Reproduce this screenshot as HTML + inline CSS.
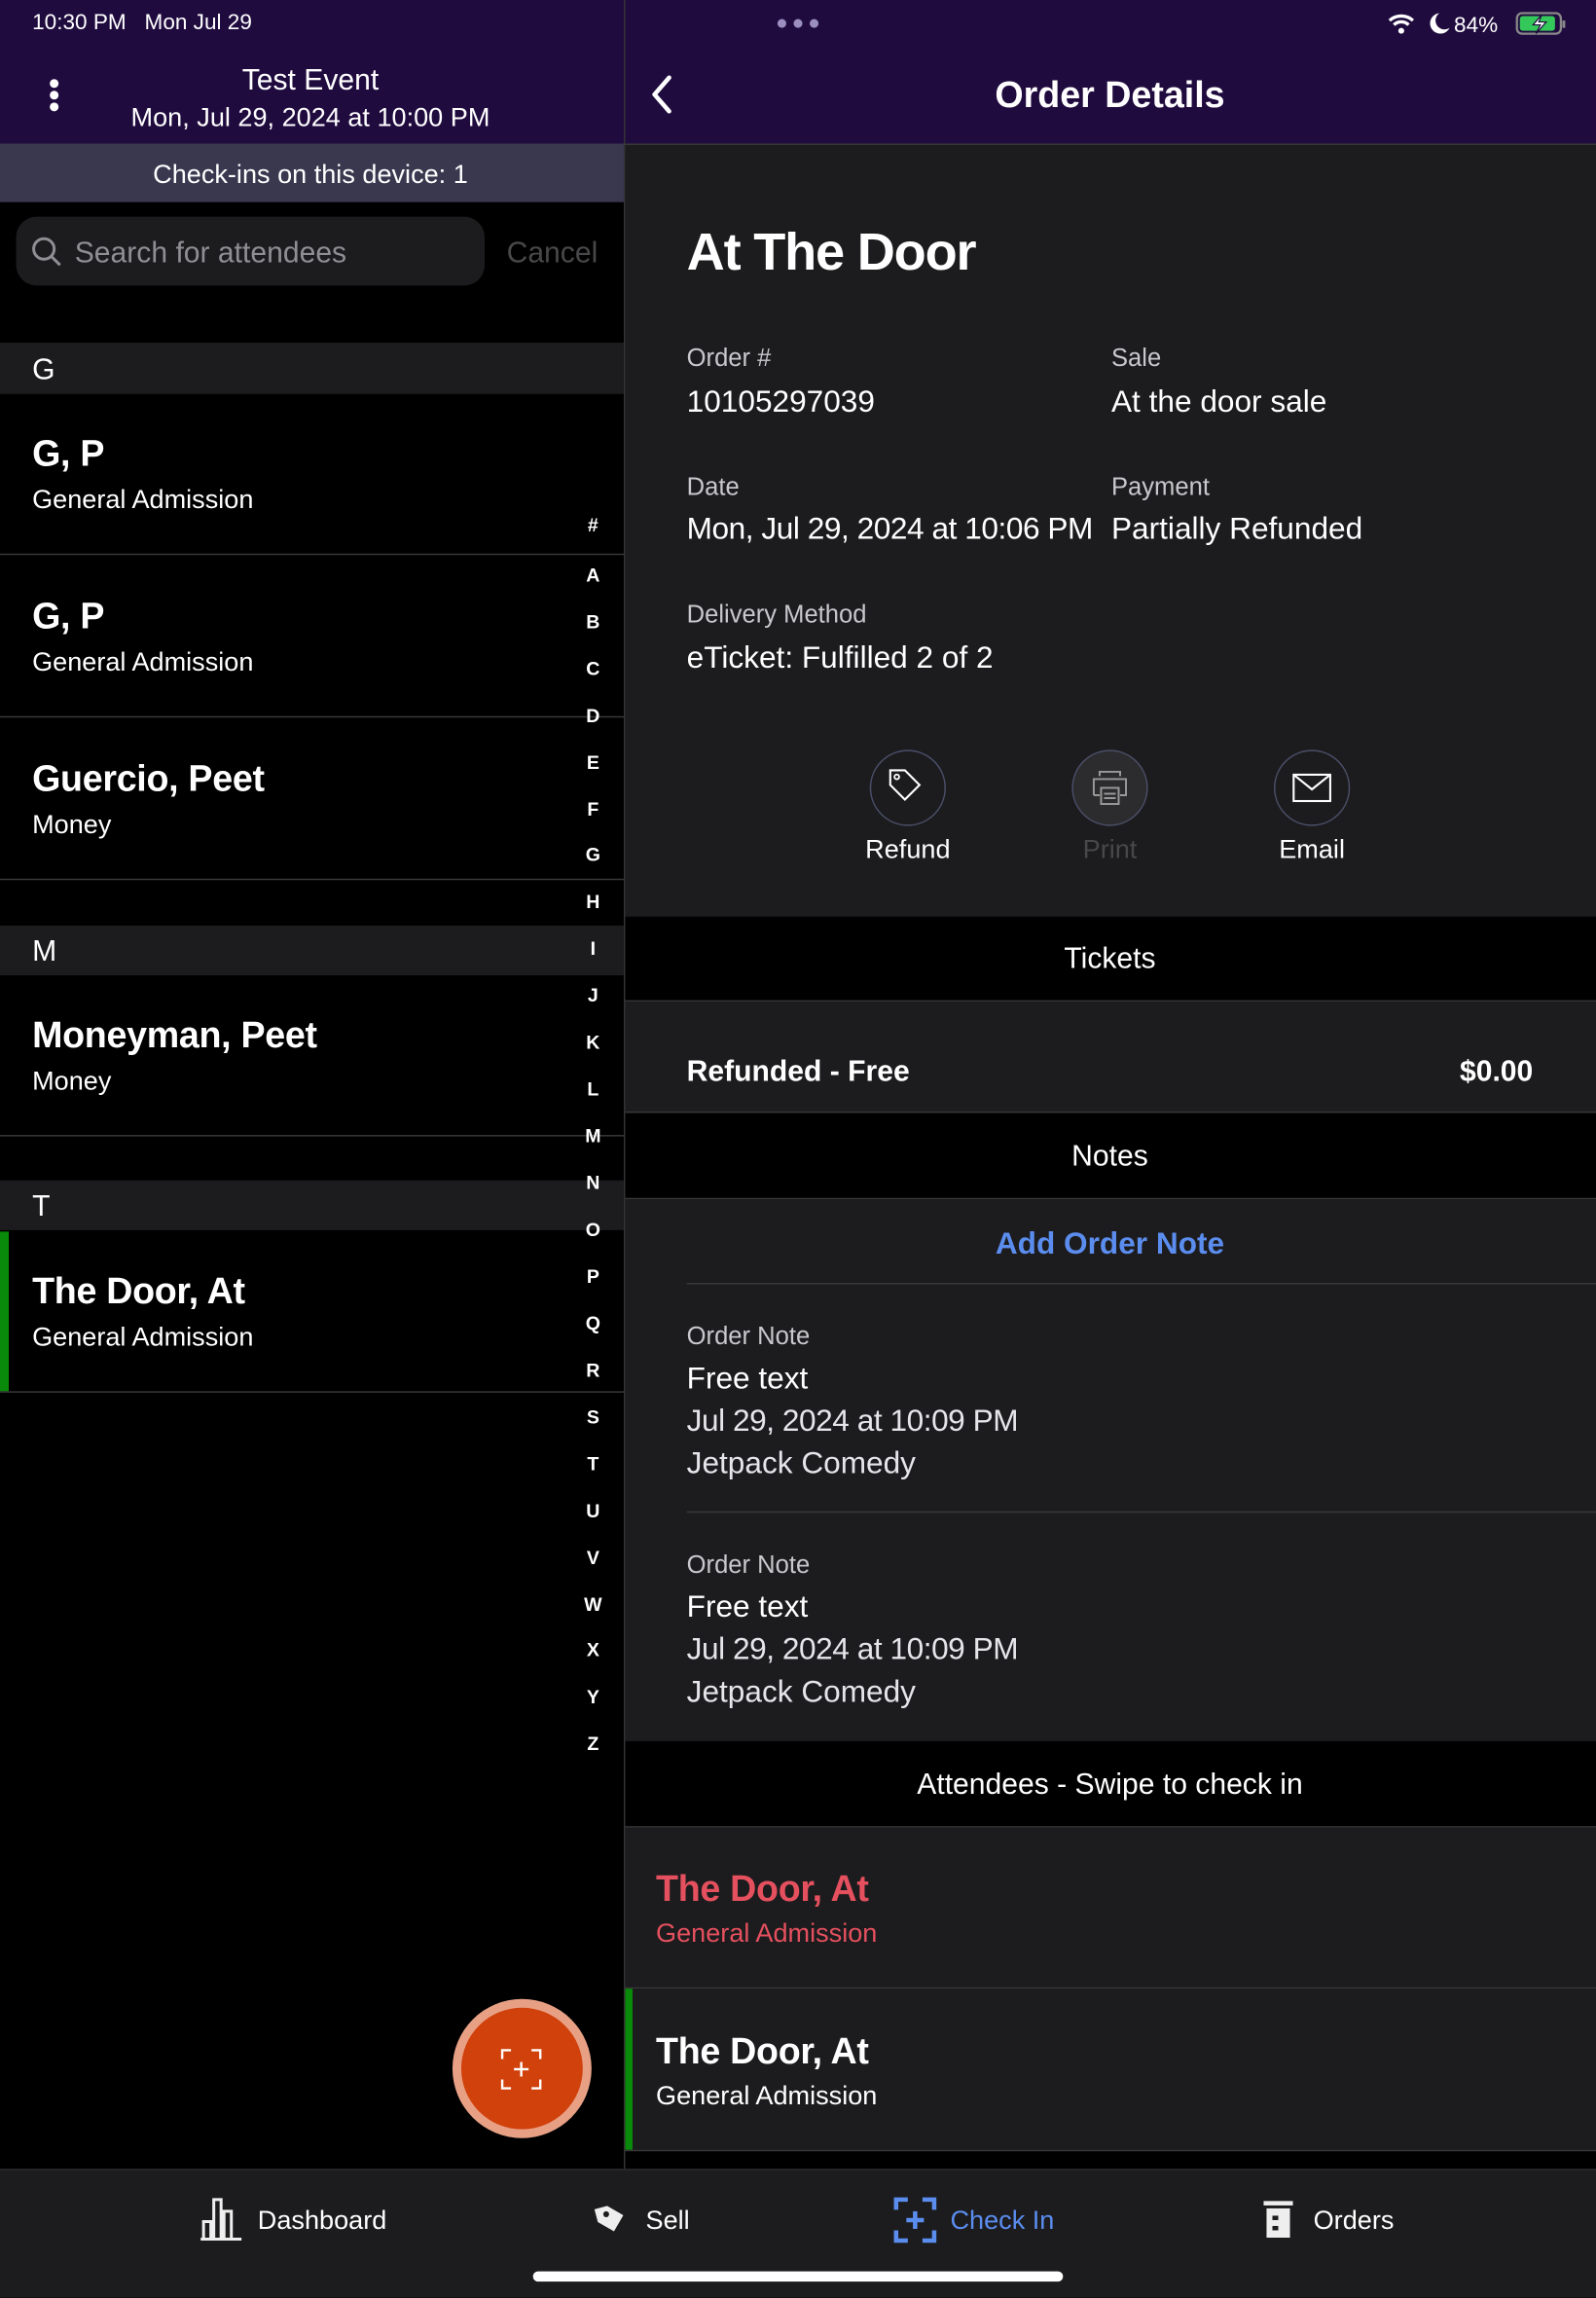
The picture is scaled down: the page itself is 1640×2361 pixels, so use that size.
<!DOCTYPE html>
<html><head><meta charset="utf-8">
<style>
*{margin:0;padding:0;box-sizing:border-box}
html,body{width:1640px;height:2360px;overflow:hidden;background:#000}
#w{position:absolute;left:0;top:0;width:1090px;height:1569px;transform:scale(1.504587);transform-origin:0 0;font-family:"Liberation Sans",sans-serif;color:#fff;overflow:hidden}
.a{position:absolute}
.t{position:absolute;white-space:nowrap;line-height:1.2;margin-top:1px}
.c{transform:translateX(-50%)}
.sep{position:absolute;height:1px;background:#38383a}
.nm{font-size:25px;font-weight:600;letter-spacing:-.2px}
.sb{font-size:18px}
.lbl{font-size:17px;color:#c8c8cc}
.val{font-size:21px}
.idx{position:absolute;left:405px;transform:translateX(-50%);font-size:13px;font-weight:700;line-height:1.2;margin-top:1px}
</style></head><body><div id="w">
<!-- header -->
<div class="a" style="left:0;top:0;width:1090px;height:98px;background:#200b3f"></div>
<div class="a" style="left:426px;top:0;width:1px;height:1481px;background:#333"></div>
<div class="sep" style="left:426px;top:98px;width:664px;background:#3a3a3c"></div>
<div class="t" style="left:22px;top:6px;font-size:15px">10:30 PM &nbsp; Mon Jul 29</div>
<div class="t c" style="left:212px;top:42px;font-size:20px">Test Event</div>
<div class="t c" style="left:212px;top:69px;font-size:18px">Mon, Jul 29, 2024 at 10:00 PM</div>
<div class="a" style="left:34px;top:54px;width:6px;height:6px;border-radius:3px;background:#fff"></div>
<div class="a" style="left:34px;top:62px;width:6px;height:6px;border-radius:3px;background:#fff"></div>
<div class="a" style="left:34px;top:70px;width:6px;height:6px;border-radius:3px;background:#fff"></div>
<div class="a" style="left:531px;top:13px;width:6px;height:6px;border-radius:3px;background:#9b8fc0"></div>
<div class="a" style="left:542px;top:13px;width:6px;height:6px;border-radius:3px;background:#9b8fc0"></div>
<div class="a" style="left:553px;top:13px;width:6px;height:6px;border-radius:3px;background:#9b8fc0"></div>
<svg class="a" style="left:946px;top:6px" width="128" height="20" viewBox="0 0 128 20">
<path d="M3 8a12 12 0 0 1 16 0M6 11a7 7 0 0 1 10 0" stroke="#fff" stroke-width="2.2" fill="none"/><circle cx="11" cy="15" r="2" fill="#fff"/>
<path d="M37 3a7 7 0 1 0 7 10a6 6 0 0 1-7-10z" fill="#fff"/>
<text x="47" y="16" fill="#fff" font-size="15" font-family="Liberation Sans">84%</text>
<rect x="90" y="3" width="30" height="14" rx="3.5" fill="none" stroke="#888" stroke-width="1.5"/><rect x="92" y="5" width="24" height="10" rx="2" fill="#34c759"/><rect x="121" y="8" width="2" height="5" fill="#888"/>
<path d="M107 4l-6 7h5l-3 6 7-8h-5z" fill="#fff" stroke="#200b3f" stroke-width=".8"/>
</svg>
<svg class="a" style="left:443px;top:51px" width="18" height="28"><path d="M14 2L4 13.5 14 25" stroke="#fff" stroke-width="3" fill="none" stroke-linecap="round" stroke-linejoin="round"/></svg>
<div class="t c" style="left:758px;top:49px;font-size:25px;font-weight:600">Order Details</div>

<!-- left -->
<div class="a" style="left:0;top:98px;width:426px;height:40px;background:#3a384f"></div>
<div class="t c" style="left:212px;top:108px;font-size:18px">Check-ins on this device: 1</div>
<div class="a" style="left:11px;top:148px;width:320px;height:47px;border-radius:14px;background:#1c1c1e"></div>
<svg class="a" style="left:21px;top:161px" width="22" height="22"><circle cx="9" cy="9" r="7" stroke="#8e8e93" stroke-width="2" fill="none"/><path d="M14 14l6 6" stroke="#8e8e93" stroke-width="2"/></svg>
<div class="t" style="left:51px;top:160px;font-size:20px;color:#8e8e93">Search for attendees</div>
<div class="t" style="left:346px;top:160px;font-size:20px;color:#48484a">Cancel</div>

<div class="a" style="left:0;top:234px;width:426px;height:35px;background:#1c1c1e"></div>
<div class="t" style="left:22px;top:240px;font-size:20px">G</div>
<div class="t nm" style="left:22px;top:294px">G, P</div>
<div class="t sb" style="left:22px;top:330px">General Admission</div>
<div class="sep" style="left:0;top:378px;width:426px"></div>
<div class="t nm" style="left:22px;top:405px">G, P</div>
<div class="t sb" style="left:22px;top:441px">General Admission</div>
<div class="sep" style="left:0;top:489px;width:426px"></div>
<div class="t nm" style="left:22px;top:516px">Guercio, Peet</div>
<div class="t sb" style="left:22px;top:552px">Money</div>
<div class="sep" style="left:0;top:600px;width:426px"></div>
<div class="a" style="left:0;top:632px;width:426px;height:34px;background:#1c1c1e"></div>
<div class="t" style="left:22px;top:637px;font-size:20px">M</div>
<div class="t nm" style="left:22px;top:691px">Moneyman, Peet</div>
<div class="t sb" style="left:22px;top:727px">Money</div>
<div class="sep" style="left:0;top:775px;width:426px"></div>
<div class="a" style="left:0;top:806px;width:426px;height:34px;background:#1c1c1e"></div>
<div class="t" style="left:22px;top:811px;font-size:20px">T</div>
<div class="a" style="left:0;top:841px;width:6px;height:109px;background:#0a8a0a"></div>
<div class="t nm" style="left:22px;top:866px">The Door, At</div>
<div class="t sb" style="left:22px;top:902px">General Admission</div>
<div class="sep" style="left:0;top:950px;width:426px"></div>

<div class="idx" style="top:350px">#</div>
<div class="idx" style="top:384px">A</div><div class="idx" style="top:416px">B</div><div class="idx" style="top:448px">C</div><div class="idx" style="top:480px">D</div><div class="idx" style="top:512px">E</div><div class="idx" style="top:544px">F</div><div class="idx" style="top:575px">G</div><div class="idx" style="top:607px">H</div><div class="idx" style="top:639px">I</div><div class="idx" style="top:671px">J</div><div class="idx" style="top:703px">K</div><div class="idx" style="top:735px">L</div><div class="idx" style="top:767px">M</div><div class="idx" style="top:799px">N</div><div class="idx" style="top:831px">O</div><div class="idx" style="top:863px">P</div><div class="idx" style="top:895px">Q</div><div class="idx" style="top:927px">R</div><div class="idx" style="top:959px">S</div><div class="idx" style="top:991px">T</div><div class="idx" style="top:1023px">U</div><div class="idx" style="top:1055px">V</div><div class="idx" style="top:1087px">W</div><div class="idx" style="top:1118px">X</div><div class="idx" style="top:1150px">Y</div><div class="idx" style="top:1182px">Z</div>

<div class="a" style="left:309px;top:1365px;width:95px;height:95px;border-radius:50%;background:#e8a085"></div>
<div class="a" style="left:315px;top:1371px;width:83px;height:83px;border-radius:50%;background:#d0410c"></div>
<svg class="a" style="left:341px;top:1398px" width="30" height="30" viewBox="0 0 30 30"><path d="M2 8V2h6M22 2h6v6M28 22v6h-6M8 28H2v-6M15 10v10M10 15h10" stroke="#fff" stroke-width="1.6" fill="none"/></svg>

<!-- right -->
<div class="a" style="left:427px;top:99px;width:663px;height:527px;background:#1c1c1e"></div>
<div class="t" style="left:469px;top:149px;font-size:36px;font-weight:700;letter-spacing:-.8px">At The Door</div>
<div class="t lbl" style="left:469px;top:234px">Order #</div>
<div class="t val" style="left:469px;top:261px">10105297039</div>
<div class="t lbl" style="left:759px;top:234px">Sale</div>
<div class="t val" style="left:759px;top:261px">At the door sale</div>
<div class="t lbl" style="left:469px;top:322px">Date</div>
<div class="t val" style="left:469px;top:348px;letter-spacing:-.3px">Mon, Jul 29, 2024 at 10:06 PM</div>
<div class="t lbl" style="left:759px;top:322px">Payment</div>
<div class="t val" style="left:759px;top:348px">Partially Refunded</div>
<div class="t lbl" style="left:469px;top:409px">Delivery Method</div>
<div class="t val" style="left:469px;top:436px">eTicket: Fulfilled 2 of 2</div>

<div class="a" style="left:594px;top:512px;width:52px;height:52px;border-radius:50%;border:1.5px solid #4a4e68"></div>
<svg class="a" style="left:605px;top:524px" width="30" height="30" viewBox="0 0 30 30"><path d="M3 2h10l10 10-10 10L3 12z" stroke="#fff" stroke-width="1.4" fill="none"/><circle cx="7.5" cy="6.5" r="1.6" stroke="#fff" stroke-width="1.2" fill="none"/></svg>
<div class="a" style="left:732px;top:512px;width:52px;height:52px;border-radius:50%;border:1.5px solid #4a4e68;background:#2c2c2e"></div>
<svg class="a" style="left:744px;top:524px" width="28" height="28" viewBox="0 0 28 28"><path d="M7 6V3h14v3M3 19V8h22v11h-4M7 19H3" stroke="#999" stroke-width="1.3" fill="none"/><rect x="8" y="14" width="12" height="11" stroke="#999" stroke-width="1.3" fill="none"/><path d="M10 18h8M10 21h8" stroke="#999" stroke-width="1.3"/></svg>
<div class="a" style="left:870px;top:512px;width:52px;height:52px;border-radius:50%;border:1.5px solid #4a4e68"></div>
<svg class="a" style="left:882px;top:526px" width="28" height="24" viewBox="0 0 28 24"><rect x="1.5" y="3" width="25" height="18" stroke="#fff" stroke-width="1.4" fill="none"/><path d="M1.5 3L14 13 26.5 3" stroke="#fff" stroke-width="1.4" fill="none"/></svg>
<div class="t c" style="left:620px;top:569px;font-size:18px">Refund</div>
<div class="t c" style="left:758px;top:569px;font-size:18px;color:#48484a">Print</div>
<div class="t c" style="left:896px;top:569px;font-size:18px">Email</div>

<div class="a" style="left:427px;top:626px;width:663px;height:58px;background:#000"></div>
<div class="t c" style="left:758px;top:642px;font-size:20px">Tickets</div>
<div class="sep" style="left:427px;top:683px;width:663px"></div>
<div class="a" style="left:427px;top:684px;width:663px;height:75px;background:#1c1c1e"></div>
<div class="t" style="left:469px;top:719px;font-size:20px;font-weight:600">Refunded - Free</div>
<div class="t" style="right:43px;top:719px;font-size:20px;font-weight:600">$0.00</div>
<div class="sep" style="left:427px;top:759px;width:663px"></div>
<div class="a" style="left:427px;top:760px;width:663px;height:58px;background:#000"></div>
<div class="t c" style="left:758px;top:777px;font-size:20px">Notes</div>
<div class="sep" style="left:427px;top:818px;width:663px"></div>
<div class="a" style="left:427px;top:819px;width:663px;height:370px;background:#1c1c1e"></div>
<div class="t c" style="left:758px;top:836px;font-size:21px;font-weight:600;color:#5b8def">Add Order Note</div>
<div class="sep" style="left:469px;top:876px;width:621px"></div>
<div class="t lbl" style="left:469px;top:902px">Order Note</div>
<div class="t val" style="left:469px;top:928px">Free text</div>
<div class="t val" style="left:469px;top:957px;color:#e5e5ea;letter-spacing:-.3px">Jul 29, 2024 at 10:09 PM</div>
<div class="t val" style="left:469px;top:986px;color:#e5e5ea">Jetpack Comedy</div>
<div class="sep" style="left:469px;top:1032px;width:621px"></div>
<div class="t lbl" style="left:469px;top:1058px">Order Note</div>
<div class="t val" style="left:469px;top:1084px">Free text</div>
<div class="t val" style="left:469px;top:1113px;color:#e5e5ea;letter-spacing:-.3px">Jul 29, 2024 at 10:09 PM</div>
<div class="t val" style="left:469px;top:1142px;color:#e5e5ea">Jetpack Comedy</div>
<div class="a" style="left:427px;top:1189px;width:663px;height:58px;background:#000"></div>
<div class="t c" style="left:758px;top:1206px;font-size:20px">Attendees - Swipe to check in</div>
<div class="sep" style="left:427px;top:1247px;width:663px"></div>
<div class="a" style="left:427px;top:1248px;width:663px;height:109px;background:#1c1c1e"></div>
<div class="t nm" style="left:448px;top:1274px;color:#e5505e">The Door, At</div>
<div class="t sb" style="left:448px;top:1309px;color:#e5505e">General Admission</div>
<div class="sep" style="left:427px;top:1357px;width:663px"></div>
<div class="a" style="left:427px;top:1358px;width:663px;height:110px;background:#1c1c1e"></div>
<div class="a" style="left:427px;top:1358px;width:5px;height:110px;background:#0a8a0a"></div>
<div class="t nm" style="left:448px;top:1385px">The Door, At</div>
<div class="t sb" style="left:448px;top:1420px">General Admission</div>
<div class="sep" style="left:427px;top:1468px;width:663px"></div>

<!-- tab bar -->
<div class="a" style="left:0;top:1481px;width:1090px;height:88px;background:#1c1c1e;border-top:1px solid #2c2c2e"></div>
<svg class="a" style="left:137px;top:1500px" width="28" height="30" viewBox="0 0 28 30"><path d="M2 29V17h5v12M9 29V2h5v27M16 29V10h5v19M0 29h28" stroke="#eee" stroke-width="2" fill="none"/></svg>
<div class="t" style="left:176px;top:1505px;font-size:18px">Dashboard</div>
<svg class="a" style="left:406px;top:1504px" width="22" height="26" viewBox="0 0 22 26"><path d="M2 2h9l9 9-9 9-9-9z" fill="#eee" transform="rotate(-15 11 11)"/><circle cx="8" cy="8" r="2" fill="#1c1c1e"/></svg>
<div class="t" style="left:441px;top:1505px;font-size:18px">Sell</div>
<svg class="a" style="left:610px;top:1500px" width="30" height="32" viewBox="0 0 30 32"><path d="M2 9V2h8M20 2h8v7M28 23v7h-8M10 30H2v-7M15 10v12M9 16h12" stroke="#5b8def" stroke-width="3" fill="none"/></svg>
<div class="t" style="left:649px;top:1505px;font-size:18px;color:#5b8def">Check In</div>
<svg class="a" style="left:862px;top:1502px" width="22" height="28" viewBox="0 0 22 28"><rect x="1" y="1" width="20" height="3" fill="#eee"/><rect x="3" y="6" width="16" height="20" fill="#eee"/><rect x="7" y="11" width="4" height="3" fill="#1c1c1e"/><rect x="7" y="18" width="4" height="3" fill="#1c1c1e"/></svg>
<div class="t" style="left:897px;top:1505px;font-size:18px">Orders</div>
<div class="a" style="left:364px;top:1551px;width:362px;height:7px;border-radius:4px;background:#fff"></div>
</div></body></html>
